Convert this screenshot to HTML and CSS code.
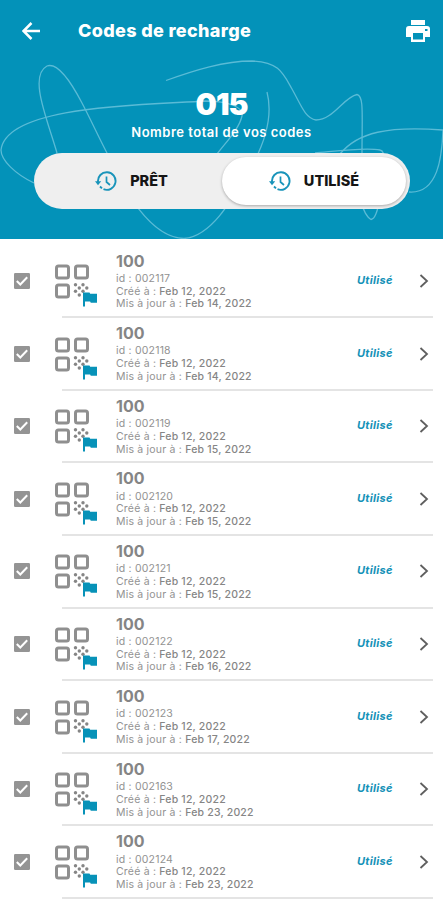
FILE: index.html
```html
<!DOCTYPE html>
<html lang="fr">
<head>
  <meta charset="UTF-8">
  <meta name="viewport" content="width=device-width, initial-scale=1">
  <title>Codes de recharge</title>
  <link rel="stylesheet" href="styles.css">
</head>
<body>

  <!-- ICONS -->
  <svg class="icon-defs" width="0" height="0">
    <symbol id="icon-history" viewBox="0 0 22 20">
      <path d="M3 11A8.8 8.8 0 1 1 8.500 18.200M5 15.500L7 17.400" fill="none" stroke="currentColor" stroke-width="1.9"/>
      <path d="M0 10.2H6.2L3 14.3Z" fill="currentColor"/>
      <path d="M11.5 5.5V11L15 14" fill="none" stroke="currentColor" stroke-width="1.7"/>
    </symbol>
    <symbol id="icon-check" viewBox="0 0 16 16">
      <rect width="16" height="16" rx="1.2" fill="#949494"/>
      <path d="M2.8 8L6.3 11.5L13.2 4.3" fill="none" stroke="#fff" stroke-width="2"/>
    </symbol>
    <symbol id="icon-qr" viewBox="0 0 42 43">
      <g fill="none" stroke="#8f8f8f" stroke-width="3">
        <rect x="1.5" y="2" width="12" height="12" rx="2"/>
        <rect x="20.5" y="2" width="12" height="12" rx="2"/>
        <rect x="1.5" y="21" width="12" height="12" rx="2"/>
      </g>
      <g fill="#858585">
        <circle cx="20.500" cy="20.800" r="1.700"/>
        <circle cx="28" cy="20.800" r="1.700"/>
        <circle cx="24.300" cy="24" r="1.700"/>
        <circle cx="31.800" cy="24" r="1.700"/>
        <circle cx="20.500" cy="27.300" r="1.700"/>
        <circle cx="28" cy="27.300" r="1.700"/>
        <circle cx="24.300" cy="31" r="1.700"/>
      </g>
      <path d="M28 28.500h6.5l.7 1.3H42v9h-6.2l-.7-1.3H30V42.500h-2z" fill="#0792b8"/>
    </symbol>
    <symbol id="icon-chevron" viewBox="0 0 10 14">
      <path d="M1.5 1L8 7L1.5 13" fill="none" stroke="#5f5f5f" stroke-width="1.8"/>
    </symbol>
  </svg>

  <!-- HEADER -->
  <header class="header">
    <svg class="header-lines" viewBox="0 0 443 239">
      <path d="M166 80.500C195 70 224 61 252 61C279 62 283 73 292 89C301 105 305 118 316 120C333 120 344 97 357 94.500C364 96 362 113 362 155V202C362 210 368 218 371 219.500C375 219 377 212 380 200C384 178 388 151 380 150C365 147 337 151 315 153"/>
      <path d="M57 153C48 121 28 76 47 66C58 62 71 82 82 103C91 120 98 136 108 155C123 190 151 238 184 238.500C214 236 235 194 255 160C266 138 273 115 267 92"/>
      <path d="M34 183C15 174 1 160 1 150C6 105 144 105 205 101C229 101 245 108 242 116C239 129 227 141 217 154"/>
      <path d="M340 154C358 132 388 126 443 130C442 157 438 194 409 192"/>
    </svg>

    <div class="topbar">
      <svg class="back-icon" viewBox="0 0 18 18">
        <path d="M9.500 1L1.500 9L9.500 17M1.500 9H18" fill="none" stroke="#fff" stroke-width="2.500"/>
      </svg>
      <h1 class="title">Codes de recharge</h1>
      <svg class="print-icon" viewBox="0 0 24 22">
        <path d="M5 0H19V5H5Z" fill="#fff"/>
        <path fill-rule="evenodd" d="M3 6H21Q24 6 24 9V17H19V22H5V17H0V9Q0 6 3 6ZM7 13V19.500H17V13ZM19 9V11H21.500V9Z" fill="#fff"/>
      </svg>
    </div>

    <div class="total">015</div>
    <div class="total-label">Nombre total de vos codes</div>

    <div class="tabs">
      <button class="tab"><svg class="tab-icon"><use href="#icon-history"/></svg><span>PRÊT</span></button>
      <button class="tab active"><svg class="tab-icon"><use href="#icon-history"/></svg><span>UTILISÉ</span></button>
    </div>
  </header>

  <!-- CODES -->
  <main class="codes">
    <div class="code">
      <svg class="check"><use href="#icon-check"/></svg>
      <svg class="qr"><use href="#icon-qr"/></svg>
      <div class="info"><h2>100</h2><p class="id">id : 002117</p><p class="created">Créé à : <b>Feb 12, 2022</b></p><p class="updated">Mis à jour à : <b>Feb 14, 2022</b></p></div>
      <span class="status">Utilisé</span>
      <svg class="chevron"><use href="#icon-chevron"/></svg>
    </div>
    <div class="code">
      <svg class="check"><use href="#icon-check"/></svg>
      <svg class="qr"><use href="#icon-qr"/></svg>
      <div class="info"><h2>100</h2><p class="id">id : 002118</p><p class="created">Créé à : <b>Feb 12, 2022</b></p><p class="updated">Mis à jour à : <b>Feb 14, 2022</b></p></div>
      <span class="status">Utilisé</span>
      <svg class="chevron"><use href="#icon-chevron"/></svg>
    </div>
    <div class="code">
      <svg class="check"><use href="#icon-check"/></svg>
      <svg class="qr"><use href="#icon-qr"/></svg>
      <div class="info"><h2>100</h2><p class="id">id : 002119</p><p class="created">Créé à : <b>Feb 12, 2022</b></p><p class="updated">Mis à jour à : <b>Feb 15, 2022</b></p></div>
      <span class="status">Utilisé</span>
      <svg class="chevron"><use href="#icon-chevron"/></svg>
    </div>
    <div class="code">
      <svg class="check"><use href="#icon-check"/></svg>
      <svg class="qr"><use href="#icon-qr"/></svg>
      <div class="info"><h2>100</h2><p class="id">id : 002120</p><p class="created">Créé à : <b>Feb 12, 2022</b></p><p class="updated">Mis à jour à : <b>Feb 15, 2022</b></p></div>
      <span class="status">Utilisé</span>
      <svg class="chevron"><use href="#icon-chevron"/></svg>
    </div>
    <div class="code">
      <svg class="check"><use href="#icon-check"/></svg>
      <svg class="qr"><use href="#icon-qr"/></svg>
      <div class="info"><h2>100</h2><p class="id">id : 002121</p><p class="created">Créé à : <b>Feb 12, 2022</b></p><p class="updated">Mis à jour à : <b>Feb 15, 2022</b></p></div>
      <span class="status">Utilisé</span>
      <svg class="chevron"><use href="#icon-chevron"/></svg>
    </div>
    <div class="code">
      <svg class="check"><use href="#icon-check"/></svg>
      <svg class="qr"><use href="#icon-qr"/></svg>
      <div class="info"><h2>100</h2><p class="id">id : 002122</p><p class="created">Créé à : <b>Feb 12, 2022</b></p><p class="updated">Mis à jour à : <b>Feb 16, 2022</b></p></div>
      <span class="status">Utilisé</span>
      <svg class="chevron"><use href="#icon-chevron"/></svg>
    </div>
    <div class="code">
      <svg class="check"><use href="#icon-check"/></svg>
      <svg class="qr"><use href="#icon-qr"/></svg>
      <div class="info"><h2>100</h2><p class="id">id : 002123</p><p class="created">Créé à : <b>Feb 12, 2022</b></p><p class="updated">Mis à jour à : <b>Feb 17, 2022</b></p></div>
      <span class="status">Utilisé</span>
      <svg class="chevron"><use href="#icon-chevron"/></svg>
    </div>
    <div class="code">
      <svg class="check"><use href="#icon-check"/></svg>
      <svg class="qr"><use href="#icon-qr"/></svg>
      <div class="info"><h2>100</h2><p class="id">id : 002163</p><p class="created">Créé à : <b>Feb 12, 2022</b></p><p class="updated">Mis à jour à : <b>Feb 23, 2022</b></p></div>
      <span class="status">Utilisé</span>
      <svg class="chevron"><use href="#icon-chevron"/></svg>
    </div>
    <div class="code">
      <svg class="check"><use href="#icon-check"/></svg>
      <svg class="qr"><use href="#icon-qr"/></svg>
      <div class="info"><h2>100</h2><p class="id">id : 002124</p><p class="created">Créé à : <b>Feb 12, 2022</b></p><p class="updated">Mis à jour à : <b>Feb 23, 2022</b></p></div>
      <span class="status">Utilisé</span>
      <svg class="chevron"><use href="#icon-chevron"/></svg>
    </div>
  </main>

</body>
</html>
```
FILE: styles.css
```css
* {
  box-sizing: border-box;
}

body {
  margin: 0;
  height: 900px;
  overflow: hidden;
  background-color: #fff;
  font-family: Inter, "Open Sans", sans-serif;
}

svg {
  display: block;
  flex-shrink: 0;
}

.icon-defs {
  position: absolute;
}

.header {
  position: relative;
  height: 239px;
  background-color: #0392b9;
  color: #fff;
  text-align: center;
}

/* decorative scribble behind the header content */
.header-lines {
  position: absolute;
  top: 0;
  left: 0;
  width: 443px;
  height: 239px;
  fill: none;
  stroke: #5abbd6;
  stroke-width: 1.3;
}

.topbar {
  position: relative;
  display: flex;
  align-items: center;
  height: 61px;
  padding: 0 13px 0 22px;
}

.back-icon {
  width: 18px;
  height: 18px;
}

.title {
  flex: 1;
  margin: 0 0 0 38px;
  text-align: left;
  font-size: 18px;
  font-weight: 800;
  letter-spacing: 0.35px;
}

.print-icon {
  width: 24px;
  height: 22px;
}

.total {
  position: relative;
  margin-top: 26px;
  font-size: 30px;
  line-height: 34px;
  font-weight: 900;
  letter-spacing: -1px;
}

.total-label {
  position: relative;
  margin-top: 2px;
  font-size: 13px;
  line-height: 18px;
  font-weight: 600;
  letter-spacing: 0.5px;
}

.tabs {
  position: relative;
  display: flex;
  width: 376px;
  height: 56px;
  margin: 12px auto 0 34px;
  padding: 4px;
  border-radius: 28px;
  background-color: #efefef;
}

.tab {
  display: flex;
  align-items: center;
  justify-content: center;
  gap: 13px;
  width: 184px;
  padding: 0 0 1px;
  border: none;
  border-radius: 24px;
  background: none;
  color: #151515;
  font-family: inherit;
  font-size: 14.5px;
  font-weight: 800;
}

.tab:first-child {
  padding-left: 3px;
}

.tab.active {
  background-color: #fff;
  box-shadow: 0 1px 3px rgba(0, 0, 0, 0.3);
}

.tab-icon {
  width: 22px;
  height: 20px;
  color: #1994ba;
}

.codes {
  padding-top: 6.6px;
}

.code {
  display: flex;
  height: 72.6px;
  padding: 0 14px;
  background: linear-gradient(#e4e4e4, #e4e4e4) 62px 100% / 371px 2px no-repeat;
}

.check {
  width: 16px;
  height: 16px;
  margin-top: 27.4px;
}

.qr {
  width: 42px;
  height: 43px;
  margin: 18.4px 0 0 25px;
}

.info {
  width: 241px;
  margin-left: 19px;
  padding-top: 6px;
  color: #929292;
}

.info h2 {
  margin: 0 0 2.2px;
  font-size: 16px;
  line-height: 19px;
  font-weight: 700;
  color: #858585;
}

.info p {
  margin: 0;
  font-size: 10.5px;
  line-height: 12.8px;
  font-weight: 400;
  letter-spacing: 0.2px;
  white-space: nowrap;
}

.info b {
  font-weight: 500;
  color: #858585;
}

.status {
  width: 62px;
  margin-top: 26.4px;
  font-size: 11px;
  line-height: 16px;
  font-weight: 700;
  font-style: italic;
  letter-spacing: 0.3px;
  color: #1692b8;
}

.chevron {
  width: 10px;
  height: 14px;
  margin-top: 28.4px;
}
```
